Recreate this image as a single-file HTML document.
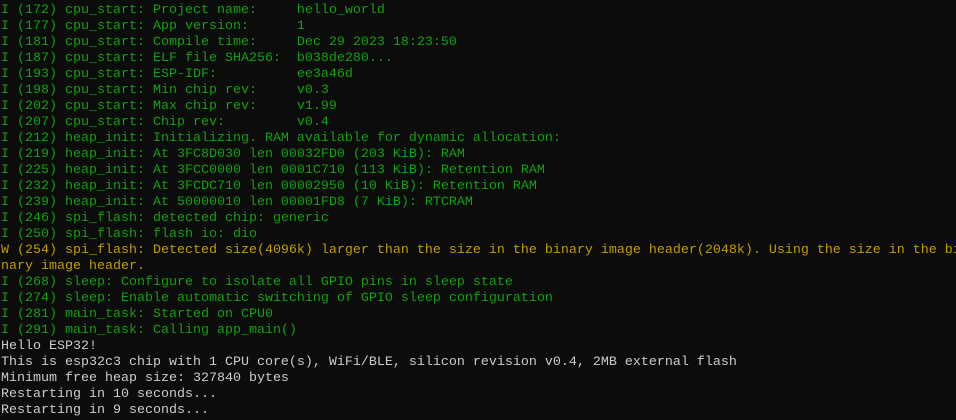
<!DOCTYPE html>
<html><head><meta charset="utf-8"><style>
html,body{margin:0;padding:0;background:#0c0c0c;width:956px;height:420px;overflow:hidden}
pre{margin:0;padding:3px 0 0 1px;font-family:"Liberation Mono",monospace;font-size:13.33px;line-height:16px;color:#cccccc;white-space:pre}
.g{color:#13a10e}.y{color:#c19c00}
</style></head><body><pre><span class="g">I (172) cpu_start: Project name:     hello_world
I (177) cpu_start: App version:      1
I (181) cpu_start: Compile time:     Dec 29 2023 18:23:50
I (187) cpu_start: ELF file SHA256:  b038de280...
I (193) cpu_start: ESP-IDF:          ee3a46d
I (198) cpu_start: Min chip rev:     v0.3
I (202) cpu_start: Max chip rev:     v1.99
I (207) cpu_start: Chip rev:         v0.4
I (212) heap_init: Initializing. RAM available for dynamic allocation:
I (219) heap_init: At 3FC8D030 len 00032FD0 (203 KiB): RAM
I (225) heap_init: At 3FCC0000 len 0001C710 (113 KiB): Retention RAM
I (232) heap_init: At 3FCDC710 len 00002950 (10 KiB): Retention RAM
I (239) heap_init: At 50000010 len 00001FD8 (7 KiB): RTCRAM
I (246) spi_flash: detected chip: generic
I (250) spi_flash: flash io: dio</span>
<span class="y">W (254) spi_flash: Detected size(4096k) larger than the size in the binary image header(2048k). Using the size in the bi
nary image header.</span>
<span class="g">I (268) sleep: Configure to isolate all GPIO pins in sleep state
I (274) sleep: Enable automatic switching of GPIO sleep configuration
I (281) main_task: Started on CPU0
I (291) main_task: Calling app_main()</span>
Hello ESP32!
This is esp32c3 chip with 1 CPU core(s), WiFi/BLE, silicon revision v0.4, 2MB external flash
Minimum free heap size: 327840 bytes
Restarting in 10 seconds...
Restarting in 9 seconds...
</pre></body></html>
